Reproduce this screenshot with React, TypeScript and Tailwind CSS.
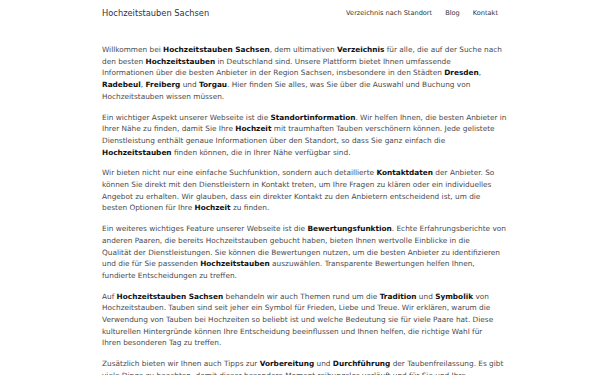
import React from 'react';

const nav = ['Verzeichnis nach Standort', 'Blog', 'Kontakt'];

function B({ children }: { children: React.ReactNode }) {
  return <strong className="font-bold text-[#111]">{children}</strong>;
}

// one entry per printed line, so the breaks stay where the design has them
const paragraphs: React.ReactNode[][] = [
  [
    <>Willkommen bei <B>Hochzeitstauben Sachsen</B>, dem ultimativen <B>Verzeichnis</B> für alle, die auf der Suche nach</>,
    <>den besten <B>Hochzeitstauben</B> in Deutschland sind. Unsere Plattform bietet Ihnen umfassende</>,
    <>Informationen über die besten Anbieter in der Region Sachsen, insbesondere in den Städten <B>Dresden</B>,</>,
    <><B>Radebeul</B>, <B>Freiberg</B> und <B>Torgau</B>. Hier finden Sie alles, was Sie über die Auswahl und Buchung von</>,
    <>Hochzeitstauben wissen müssen.</>,
  ],
  [
    <>Ein wichtiger Aspekt unserer Webseite ist die <B>Standortinformation</B>. Wir helfen Ihnen, die besten Anbieter in</>,
    <>Ihrer Nähe zu finden, damit Sie Ihre <B>Hochzeit</B> mit traumhaften Tauben verschönern können. Jede gelistete</>,
    <>Dienstleistung enthält genaue Informationen über den Standort, so dass Sie ganz einfach die</>,
    <><B>Hochzeitstauben</B> finden können, die in Ihrer Nähe verfügbar sind.</>,
  ],
  [
    <>Wir bieten nicht nur eine einfache Suchfunktion, sondern auch detaillierte <B>Kontaktdaten</B> der Anbieter. So</>,
    <>können Sie direkt mit den Dienstleistern in Kontakt treten, um Ihre Fragen zu klären oder ein individuelles</>,
    <>Angebot zu erhalten. Wir glauben, dass ein direkter Kontakt zu den Anbietern entscheidend ist, um die</>,
    <>besten Optionen für Ihre <B>Hochzeit</B> zu finden.</>,
  ],
  [
    <>Ein weiteres wichtiges Feature unserer Webseite ist die <B>Bewertungsfunktion</B>. Echte Erfahrungsberichte von</>,
    <>anderen Paaren, die bereits Hochzeitstauben gebucht haben, bieten Ihnen wertvolle Einblicke in die</>,
    <>Qualität der Dienstleistungen. Sie können die Bewertungen nutzen, um die besten Anbieter zu identifizieren</>,
    <>und die für Sie passenden <B>Hochzeitstauben</B> auszuwählen. Transparente Bewertungen helfen Ihnen,</>,
    <>fundierte Entscheidungen zu treffen.</>,
  ],
  [
    <>Auf <B>Hochzeitstauben Sachsen</B> behandeln wir auch Themen rund um die <B>Tradition</B> und <B>Symbolik</B> von</>,
    <>Hochzeitstauben. Tauben sind seit jeher ein Symbol für Frieden, Liebe und Treue. Wir erklären, warum die</>,
    <>Verwendung von Tauben bei Hochzeiten so beliebt ist und welche Bedeutung sie für viele Paare hat. Diese</>,
    <>kulturellen Hintergründe können Ihre Entscheidung beeinflussen und Ihnen helfen, die richtige Wahl für</>,
    <>Ihren besonderen Tag zu treffen.</>,
  ],
  [
    <>Zusätzlich bieten wir Ihnen auch Tipps zur <B>Vorbereitung</B> und <B>Durchführung</B> der Taubenfreilassung. Es gibt</>,
    <>viele Dinge zu beachten, damit dieser besondere Moment reibungslos verläuft und für Sie und Ihre</>,
    <>Gäste unvergesslich bleibt.</>,
  ],
];

export default function App() {
  return (
    <div className="min-h-screen bg-white text-[#4a4a4a] [font-family:'DejaVu_Sans',sans-serif]">
      <div className="mx-auto w-[404px] pl-[4px]">
        <header className="flex h-[27px] items-center justify-between">
          <a className="text-[8.3px] text-[#333]" href="#">
            Hochzeitstauben Sachsen
          </a>
          <nav className="flex gap-[13px] pr-[4px]">
            {nav.map((item) => (
              <a key={item} className="text-[6.6px] text-[#333]" href="#">
                {item}
              </a>
            ))}
          </nav>
        </header>

        <main className="space-y-[9px] pt-[17px] text-[7.35px] leading-[11.7px]">
          {paragraphs.map((lines, i) => (
            <p key={i} className="whitespace-nowrap">
              {lines.map((line, j) => (
                <React.Fragment key={j}>
                  {line}
                  {j < lines.length - 1 && <br />}
                </React.Fragment>
              ))}
            </p>
          ))}
        </main>
      </div>
    </div>
  );
}
